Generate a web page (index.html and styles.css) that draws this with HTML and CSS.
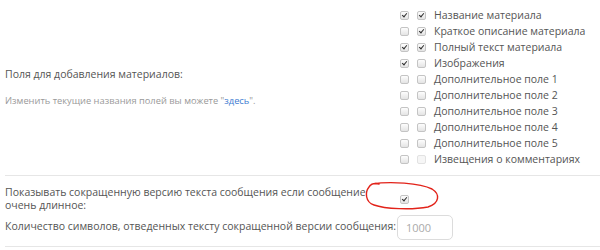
FILE: index.html
```html
<!DOCTYPE html>
<html lang="ru">
<head>
<meta charset="utf-8">
<link rel="stylesheet" href="styles.css">
</head>
<body>
<div class="form">
  <section class="block fields">
    <div class="label">
      <div class="title">Поля для добавления материалов:</div>
      <div class="hint">Изменить текущие названия полей вы можете "<a class="link">здесь</a>".</div>
    </div>
    <ul class="list">
      <li><span class="cb on"></span><span class="cb on"></span><span>Название материала</span></li>
      <li><span class="cb"></span><span class="cb on"></span><span>Краткое описание материала</span></li>
      <li><span class="cb on"></span><span class="cb on"></span><span>Полный текст материала</span></li>
      <li><span class="cb on"></span><span class="cb"></span><span>Изображения</span></li>
      <li><span class="cb"></span><span class="cb"></span><span>Дополнительное поле 1</span></li>
      <li><span class="cb"></span><span class="cb"></span><span>Дополнительное поле 2</span></li>
      <li><span class="cb"></span><span class="cb"></span><span>Дополнительное поле 3</span></li>
      <li><span class="cb"></span><span class="cb"></span><span>Дополнительное поле 4</span></li>
      <li><span class="cb"></span><span class="cb"></span><span>Дополнительное поле 5</span></li>
      <li><span class="cb"></span><span class="cb off"></span><span>Извещения о комментариях</span></li>
    </ul>
  </section>
  <section class="block opts">
    <div class="row">
      <div class="label">Показывать сокращенную версию текста сообщения если сообщение очень длинное:</div>
      <div class="ctl"><span class="cb on"></span></div>
    </div>
    <div class="row">
      <div class="label">Количество символов, отведенных тексту сокращенной версии сообщения:</div>
      <div class="ctl"><input class="num" type="text" placeholder="1000"></div>
    </div>
  </section>
  <svg class="scribble" width="90" height="40" viewBox="0 0 90 40">
    <path d="M12,9 C30,6 60,8 72,14 C80,19 80,28 68,32 C52,35 25,34 14,30 C5,27 5,17 9,12 C11,9 15,8 19,9" fill="none" stroke="#e2231a" stroke-width="1.4" stroke-linecap="round"/>
  </svg>
</div>
</body>
</html>
```

FILE: styles.css
```css
html, body {
  margin: 0;
  padding: 0;
  background: #fff;
}
body {
  font-family: "Open Sans", "DejaVu Sans", sans-serif;
  font-size: 10.5px;
  color: #555;
}
.form {
  position: relative;
  padding-left: 5px;
}
.block {
  display: grid;
  grid-template-columns: 390px 1fr;
}
.fields {
  padding-top: 7px;
  padding-bottom: 8px;
  border-bottom: 1px solid #e6e6e6;
  align-items: center;
}
.title {
  margin-bottom: 13px;
  line-height: 14px;
}
.hint {
  font-size: 9.3px;
  color: #999;
  white-space: nowrap;
}
.link {
  color: #3d7bd1;
}
.list {
  list-style: none;
  margin: 0;
  padding: 0 0 0 5px;
}
.list li {
  display: flex;
  align-items: center;
  height: 16px;
  white-space: nowrap;
}
.cb {
  box-sizing: border-box;
  width: 9px;
  height: 9px;
  border: 1px solid #c4c4c4;
  border-radius: 2px;
  background: linear-gradient(#fdfdfd, #e4e4e4);
  margin-right: 8px;
  position: relative;
  flex: none;
  display: inline-block;
}
.cb.on::after {
  content: "";
  position: absolute;
  left: 1px;
  top: 1px;
  width: 4px;
  height: 2px;
  border-left: 1.7px solid #2f2f2f;
  border-bottom: 1.7px solid #2f2f2f;
  transform: rotate(-50deg);
  transform-origin: center;
}
.cb.off {
  border-color: #e2e2e2;
  background: #f6f6f6;
}
.opts {
  padding-top: 10px;
  padding-bottom: 6px;
  border-bottom: 1px solid #e6e6e6;
}
.opts .row {
  display: contents;
}
.opts .label {
  line-height: 13px;
  align-self: center;
}
.opts .row:first-child .label {
  padding-right: 22px;
}
.opts .ctl {
  align-self: center;
  display: flex;
  align-items: center;
}
.opts .row:first-child .ctl {
  padding-left: 5px;
}
.opts .row:last-child .label {
  white-space: nowrap;
}
.opts .row:last-child .ctl {
  padding-top: 0;
  padding-left: 2px;
}
.num {
  box-sizing: border-box;
  width: 56px;
  height: 25px;
  margin-top: 3px;
  border: 1px solid #dcdcdc;
  border-radius: 5px;
  padding: 0 8px;
  font-family: "Open Sans", sans-serif;
  font-size: 11px;
  color: #555;
  outline: none;
}
.num::placeholder {
  color: #aaa;
}
.scribble {
  position: absolute;
  left: 360px;
  top: 175px;
}
```
